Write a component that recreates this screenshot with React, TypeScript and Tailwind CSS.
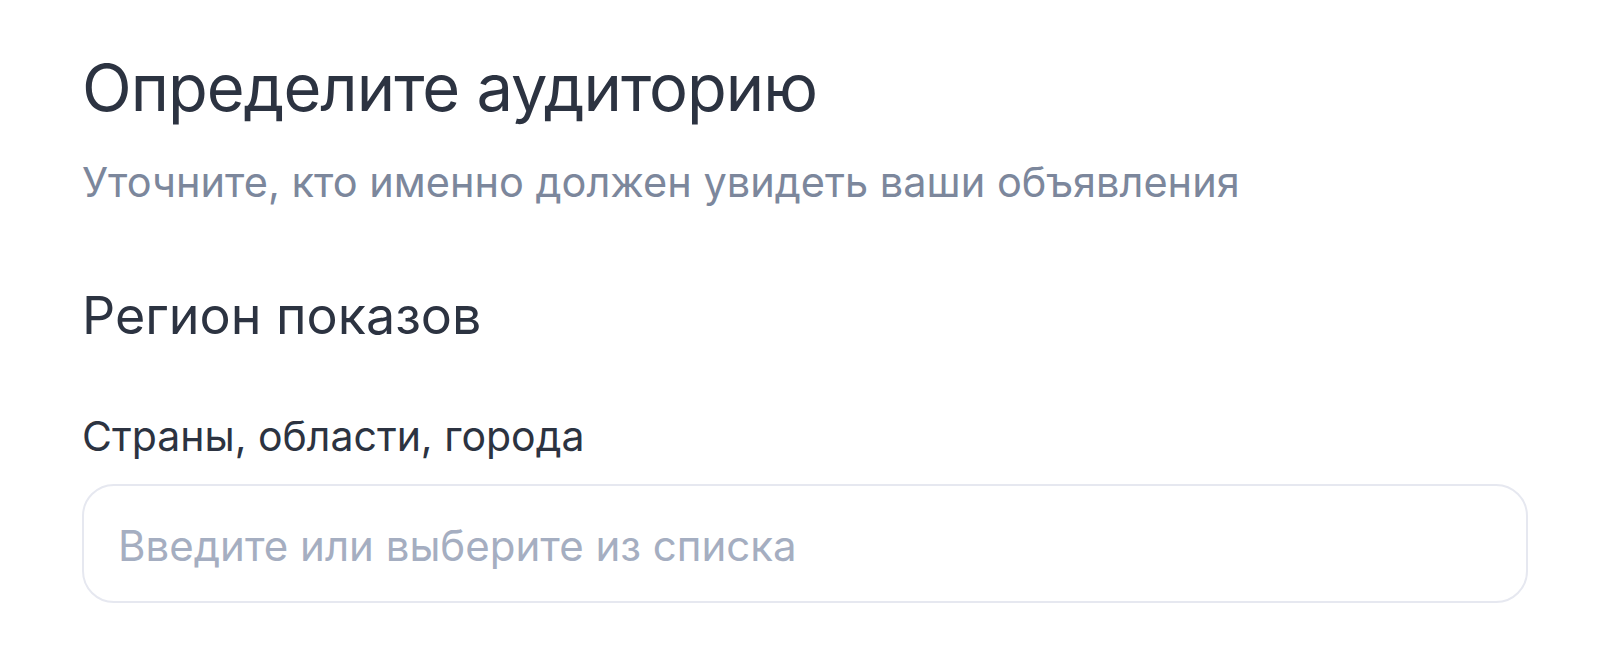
const AudienceStep = () => {
  return (
    <main className="min-h-screen bg-white pl-[82px] pt-[50px] font-['Inter',sans-serif]">
      <div className="w-[1446px]">
        <h1 className="text-[65px] leading-[76px] font-normal tracking-[-1px] text-[#2c3341]">
          Определите аудиторию
        </h1>
        <p className="mt-[30px] text-[41.5px] leading-[52px] text-[#7c879c]">
          Уточните, кто именно должен увидеть ваши объявления
        </p>
        <h2 className="mt-[76px] text-[52px] leading-[64px] font-normal text-[#2c3341]">
          Регион показов
        </h2>
        <label className="mt-[62px] block text-[41px] leading-[52px] text-[#2c3341]">
          Страны, области, города
        </label>
        <div className="mt-[22px] flex h-[119px] items-center rounded-[32px] border-2 border-[#e6e8f0] px-[34px] pt-[4px]">
          <input
            type="text"
            placeholder="Введите или выберите из списка"
            className="w-full bg-transparent text-[42px] leading-[52px] text-[#2c3341] outline-none placeholder:text-[#a5aec1]"
          />
        </div>
      </div>
    </main>
  );
};

export default AudienceStep;
